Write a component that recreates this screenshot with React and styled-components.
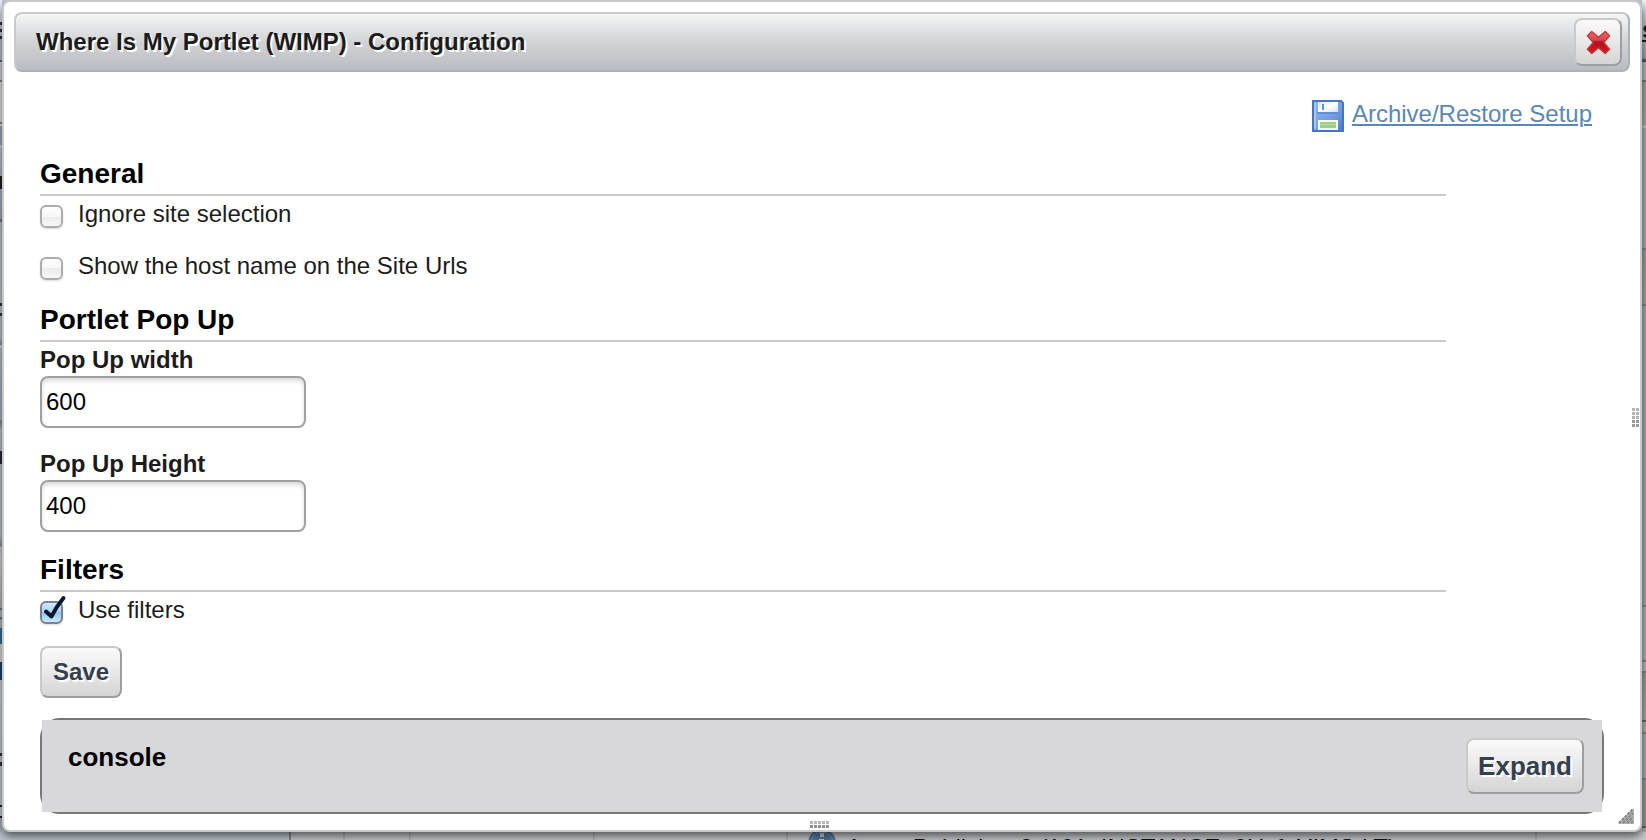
import React, { useState } from "react";
import styled, { createGlobalStyle } from "styled-components";

const GlobalStyle = createGlobalStyle`
  *, *::before, *::after { box-sizing: border-box; }
  body {
    margin: 0;
    background: #c6ccd4;
    color: #1c1c1c;
    font-family: "Liberation Sans", Arial, Helvetica, sans-serif;
    font-size: 24px;
    line-height: 28px;
  }
  button, input { font-family: inherit; }
`;

const Page = styled.div`
  min-height: 100vh;
  display: flex;
  flex-direction: column;
  overflow: hidden;
`;

const Stage = styled.div`
  display: flex;
`;

const LeftEdge = styled.div`
  flex: 0 0 2px;
  background: linear-gradient(
    #eef2f8 0 6px, #dde3ea 22px, #333 22px 25px, #c4ccd6 25px 29px, #333 29px 32px, #c4ccd6 32px 36px,
    #333 36px 39px, #bcc4ce 39px 60px, #66696e 60px 62px, #d4d8dc 62px 80px, #888 80px 82px,
    #e2e2e0 82px 122px, #888 122px 124px, #f0f0f0 124px 126px, #a2aab8 126px 145px, #d0d8de 145px 148px,
    #bcc6cf 148px, #b4bcca 176px, #222 176px 189px, #b0b7c6 189px, #a5abbc 219px, #777 219px 222px,
    #c0c4cc 222px, #c2c8d0 303px, #333 303px 306px, #c0c8d0 306px 313px, #333 313px 316px,
    #bcc4ce 316px 338px, #8a8e94 345px, #d8e0e4 345px 348px, #b8c4cc 348px, #a9afc2 420px,
    #84878c 421px, #bcc2cc 430px 451px, #282c34 451px 464px, #bcc2cc 464px 535px, #92969c 546px,
    #c8d4dc 547px 554px, #dadada 555px, #b8b8b8 608px, #777 608px 610px, #b4bcc8 610px 617px,
    #777 617px 619px, #b4bcc8 620px 628px, #386ea0 628px 644px, #dedede 644px 662px,
    #18466e 662px 680px, #ccd3dc 680px, #c4ccd2 753px, #333 753px 756px, #c0c8d0 756px 762px,
    #333 762px 766px, #c8ced8 766px 805px, #222 805px 807px, #c8ced8 807px 816px, #222 816px 818px,
    #b4b9c0 818px
  );
`;

const RightEdge = styled.div`
  flex: 0 0 4px;
  overflow: hidden;
  padding-top: 16px;
  font-weight: bold;
  text-decoration: underline;
  background: linear-gradient(
    #f0f4fa 0, #c0c8d2 22px, #9ba4b2 58px, #555 60px 62px, #b4b6b8 62px 80px, #777 80px 82px,
    #a3a39f 82px, #aaa9a6 125px, #c4c4c4 126px 128px, #a9abae 128px 248px, #888 248px 250px,
    #9c9c99 250px, #a5a5a3 304px, #858585 304px 306px, #a6a8aa 306px 605px, #888 605px 607px,
    #b0b1b4 607px 660px, #888 660px 662px, #b8b8b8 662px 671px, #888 671px 673px, #999 673px,
    #a9a9a9 720px, #666 720px 722px, #b0b0b0 722px 732px, #888 732px 734px, #a9abae 734px 778px,
    #888 778px 780px, #999 780px 826px, #666 826px 828px, #aaa 828px
  );
`;

const BottomEdge = styled.div`
  flex: 1 0 8px;
  max-height: 8px;
  display: flex;
  overflow: hidden;
  background: #c6c8ca;
`;

const Cell = styled.div`
  flex: 0 0 ${(p) => p.$width};
  border-right: 2px solid ${(p) => p.$line || "#b4b6b8"};
  background: ${(p) => p.$fill || "transparent"};
`;

const PortletCell = styled(Cell)`
  display: flex;
  align-items: flex-start;
  gap: 10px;
  padding-left: 20px;
  color: #111;
  white-space: nowrap;
  svg { flex: none; }
  span { margin-top: 2px; }
`;

const Dialog = styled.section`
  position: relative;
  z-index: 1;
  flex: 1;
  min-width: 0;
  padding: 10px;
  background: #fff;
  border: 2px solid #c8c9ca;
  border-radius: 8px;
  box-shadow: 0 4px 10px rgba(0, 0, 0, 0.6);
`;

const TitleBar = styled.header`
  display: flex;
  align-items: center;
  justify-content: space-between;
  height: 60px;
  padding: 0 6px 0 20px;
  border: 2px solid;
  border-color: #c8c9ca #aeb1b8 #aeb1b8 #c8c9ca;
  border-radius: 8px;
  background: linear-gradient(#f4f5f5, #d2d3d5 50%, #bbbcc2);
`;

const Title = styled.h1`
  margin: 0;
  font-size: 24px;
  line-height: 28px;
  color: #1c1c1c;
  text-shadow: 2px 2px #fff;
`;

const Button = styled.button`
  padding: 0 ${(p) => (p.$large ? "10px" : "11px")};
  height: ${(p) => (p.$large ? "56px" : "52px")};
  border: 2px solid;
  border-color: #c8c9ca #9e9e9e #9e9e9e #c8c9ca;
  border-radius: 8px;
  background: linear-gradient(#fafafa, #ececec 40%, #d4d4d4);
  color: #34404f;
  font-size: ${(p) => (p.$large ? "26px" : "24px")};
  font-weight: bold;
  text-shadow: 2px 2px #fff;
`;

const CloseButton = styled(Button)`
  display: grid;
  place-items: center;
  width: 48px;
  height: 48px;
  padding: 0;
`;

const Content = styled.div`
  padding: 28px 26px 6px;
`;

const ArchiveRow = styled.div`
  display: flex;
  justify-content: flex-end;
  padding-right: 12px;
`;

const ArchiveLink = styled.a`
  display: flex;
  gap: 8px;
  color: #5b88b3;
  text-decoration: none;
  span {
    text-decoration: underline;
    text-decoration-thickness: 2px;
    text-underline-offset: 2px;
  }
`;

const Fieldset = styled.fieldset`
  margin: ${(p) => p.$gap || "24px"} 158px 0 0;
  padding: 0;
  border: 0;
`;

const Legend = styled.legend`
  width: 100%;
  padding: 0 0 4px;
  margin-bottom: 4px;
  border-bottom: 2px solid #c8c9ca;
  color: #000;
  font-size: 28px;
  font-weight: bold;
  line-height: 32px;
`;

const CheckLabel = styled.label`
  display: flex;
  align-items: flex-start;
  gap: 15px;
  width: fit-content;
  & + & { margin-top: 24px; }
`;

const CheckBox = styled.span`
  position: relative;
  width: 23px;
  height: 23px;
  margin-top: 5px;
  input {
    appearance: none;
    display: block;
    width: 23px;
    height: 23px;
    margin: 0;
    border: 2px solid #acacac;
    border-radius: 6px;
    background: linear-gradient(#fff, #f6f6f6 50%, #ebebeb 50%, #f8f8f8);
    box-shadow: 0 1px 2px rgba(0, 0, 0, 0.15);
  }
  input:checked {
    border-color: #7c8296;
    background: linear-gradient(#d3e8fa, #a6cff5 50%, #91c3f3 50%, #c4ecff);
  }
  svg {
    display: none;
    position: absolute;
    left: 0;
    bottom: 2px;
    pointer-events: none;
  }
  input:checked + svg { display: block; }
`;

const Field = styled.div`
  display: flex;
  flex-direction: column;
  align-items: flex-start;
  gap: 2px;
  & + & { margin-top: 22px; }
  label { font-weight: bold; }
`;

const TextInput = styled.input`
  width: 266px;
  height: 52px;
  padding: 0 4px;
  border: 2px solid #a0a0a0;
  border-radius: 8px;
  background: #fff;
  box-shadow: inset 0 3px 4px rgba(0, 0, 0, 0.15);
  color: #000;
  font-size: 24px;
`;

const Actions = styled.div`
  display: flex;
  margin: 22px 0 20px;
`;

const ConsoleFrame = styled.section`
  border: 2px solid #777;
  border-radius: 20px;
`;

const ConsoleBar = styled.div`
  display: flex;
  align-items: flex-start;
  justify-content: space-between;
  padding: 18px 18px 18px 26px;
  background: #d8d8da;
`;

const ConsoleTitle = styled.h2`
  margin: 0;
  color: #000;
  font-size: 26px;
  line-height: 38px;
`;

const RightGrip = styled.svg`
  position: absolute;
  right: 0;
  top: calc(50% - 8px);
`;

const BottomGrip = styled.svg`
  position: absolute;
  bottom: 1px;
  left: calc(50% - 12px);
`;

const CornerGrip = styled.svg`
  position: absolute;
  right: 6px;
  bottom: 6px;
`;

function CloseIcon() {
  return (
    <svg width="25" height="25" viewBox="0 0 26 26" aria-hidden="true">
      <defs>
        <linearGradient id="cross" x1="0" y1="0" x2="0" y2="1">
          <stop offset="0" stopColor="#e86a6a" />
          <stop offset="0.38" stopColor="#d6484c" />
          <stop offset="0.48" stopColor="#b01218" />
          <stop offset="1" stopColor="#d8181e" />
        </linearGradient>
      </defs>
      <path
        d="M6 1.500 L13 7.500 L20 1.500 L24.500 6 L18.500 13 L24.500 20 L20 24.500 L13 18.500 L6 24.500 L1.500 20 L7.500 13 L1.500 6 Z"
        fill="url(#cross)"
        stroke="#c2383e"
        strokeWidth="1.500"
        strokeLinejoin="round"
      />
    </svg>
  );
}

function DiskIcon() {
  return (
    <svg width="32" height="32" viewBox="0 0 32 32" aria-hidden="true">
      <defs>
        <linearGradient id="disk" x1="0" y1="0" x2="1" y2="1">
          <stop offset="0" stopColor="#8fb7ee" />
          <stop offset="0.6" stopColor="#709de0" />
          <stop offset="1" stopColor="#4a79c6" />
        </linearGradient>
        <linearGradient id="shutter" x1="0" y1="0" x2="1" y2="1">
          <stop offset="0" stopColor="#d5e4f8" />
          <stop offset="0.5" stopColor="#fff" />
          <stop offset="1" stopColor="#d2e2f7" />
        </linearGradient>
      </defs>
      <path d="M1 1H29L31 3V31H1Z" fill="url(#disk)" stroke="#4576bf" strokeWidth="2" />
      <path d="M3 3V29" stroke="#a5c6f4" strokeWidth="2" />
      <path d="M6 2H26V12H6Z" fill="url(#shutter)" />
      <path d="M10 4H12V10H10Z" fill="#6792d2" />
      <path d="M5 12H27V14H5Z" fill="#648fd6" />
      <path d="M6 20H26V30H6Z" fill="#f4f9f2" />
      <path d="M8 22H24V28H8Z" fill="#9fcf86" />
      <path d="M8 24.500H24" stroke="#b7dea2" strokeWidth="1" />
    </svg>
  );
}

function CheckMark() {
  return (
    <svg width="28" height="28" viewBox="0 0 28 28" aria-hidden="true">
      <path
        d="M6 17.500 L11.500 22.500 Q16 13 23.500 4"
        fill="none"
        stroke="#06182f"
        strokeWidth="4"
        strokeLinecap="round"
        strokeLinejoin="round"
      />
    </svg>
  );
}

function Checkbox({ label, initial = false }) {
  const [checked, setChecked] = useState(initial);
  return (
    <CheckLabel>
      <CheckBox>
        <input type="checkbox" checked={checked} onChange={() => setChecked(!checked)} />
        <CheckMark />
      </CheckBox>
      {label}
    </CheckLabel>
  );
}

const dots = (columns, rows, step) =>
  Array.from({ length: columns * rows }, (_, i) => ({
    x: (i % columns) * step,
    y: Math.floor(i / columns) * step,
  }));

export default function App() {
  return (
    <Page>
      <GlobalStyle />
      <Stage>
        <LeftEdge />
        <Dialog aria-labelledby="dialog-title">
          <TitleBar>
            <Title id="dialog-title">Where Is My Portlet (WIMP) - Configuration</Title>
            <CloseButton type="button" aria-label="Close">
              <CloseIcon />
            </CloseButton>
          </TitleBar>
          <Content>
            <ArchiveRow>
              <ArchiveLink href="#archive">
                <DiskIcon />
                <span>Archive/Restore Setup</span>
              </ArchiveLink>
            </ArchiveRow>
            <Fieldset $gap="26px">
              <Legend>General</Legend>
              <Checkbox label="Ignore site selection" />
              <Checkbox label="Show the host name on the Site Urls" />
            </Fieldset>
            <Fieldset>
              <Legend>Portlet Pop Up</Legend>
              <Field>
                <label htmlFor="popup-width">Pop Up width</label>
                <TextInput id="popup-width" type="text" defaultValue="600" />
              </Field>
              <Field>
                <label htmlFor="popup-height">Pop Up Height</label>
                <TextInput id="popup-height" type="text" defaultValue="400" />
              </Field>
            </Fieldset>
            <Fieldset $gap="22px">
              <Legend>Filters</Legend>
              <Checkbox label="Use filters" initial />
            </Fieldset>
            <Actions>
              <Button type="button">Save</Button>
            </Actions>
            <ConsoleFrame>
              <ConsoleBar>
                <ConsoleTitle>console</ConsoleTitle>
                <Button type="button" $large>Expand</Button>
              </ConsoleBar>
            </ConsoleFrame>
          </Content>
          <RightGrip width="8" height="20" aria-hidden="true">
            {dots(2, 5, 4).map((d) => (
              <rect key={`${d.x}-${d.y}`} x={d.x} y={d.y} width="3" height="3" fill={d.y > 8 ? "#9a9a9a" : "#b4b4b4"} />
            ))}
          </RightGrip>
          <BottomGrip width="20" height="10" aria-hidden="true">
            {dots(5, 2, 4).map((d) => (
              <rect key={`${d.x}-${d.y}`} x={d.x} y={d.y + 2} width="3" height="3" fill={d.y ? "#929292" : "#b8b8b8"} />
            ))}
          </BottomGrip>
          <CornerGrip width="16" height="16" viewBox="0 0 16 16" aria-hidden="true">
            <path d="M0 16L16 0V16Z" fill="#b4b4b4" />
            <path d="M1 15L15 1M5 15L15 5M9 15L15 9M13 15L15 13" stroke="#858585" strokeWidth="2" strokeDasharray="3 1" />
          </CornerGrip>
        </Dialog>
        <RightEdge>s</RightEdge>
      </Stage>
      <BottomEdge>
        <Cell $width="291px" $line="#888" $fill="#bcc5cf" />
        <Cell $width="54px" />
        <Cell $width="66px" />
        <Cell $width="184px" />
        <Cell $width="193px" />
        <PortletCell $width="749px">
          <svg width="28" height="28" viewBox="0 0 28 28" aria-hidden="true">
            <circle cx="14" cy="11" r="14" fill="#55759c" />
            <circle cx="14" cy="11" r="11" fill="none" stroke="#7b9ec6" strokeWidth="1" />
            <path d="M12 1H16V5H12ZM11 7H16V17H11Z" fill="#c4d0dc" />
          </svg>
          <span>Asset Publisher 2 (101_INSTANCE_0UyfaYIMStLT)</span>
        </PortletCell>
      </BottomEdge>
    </Page>
  );
}
